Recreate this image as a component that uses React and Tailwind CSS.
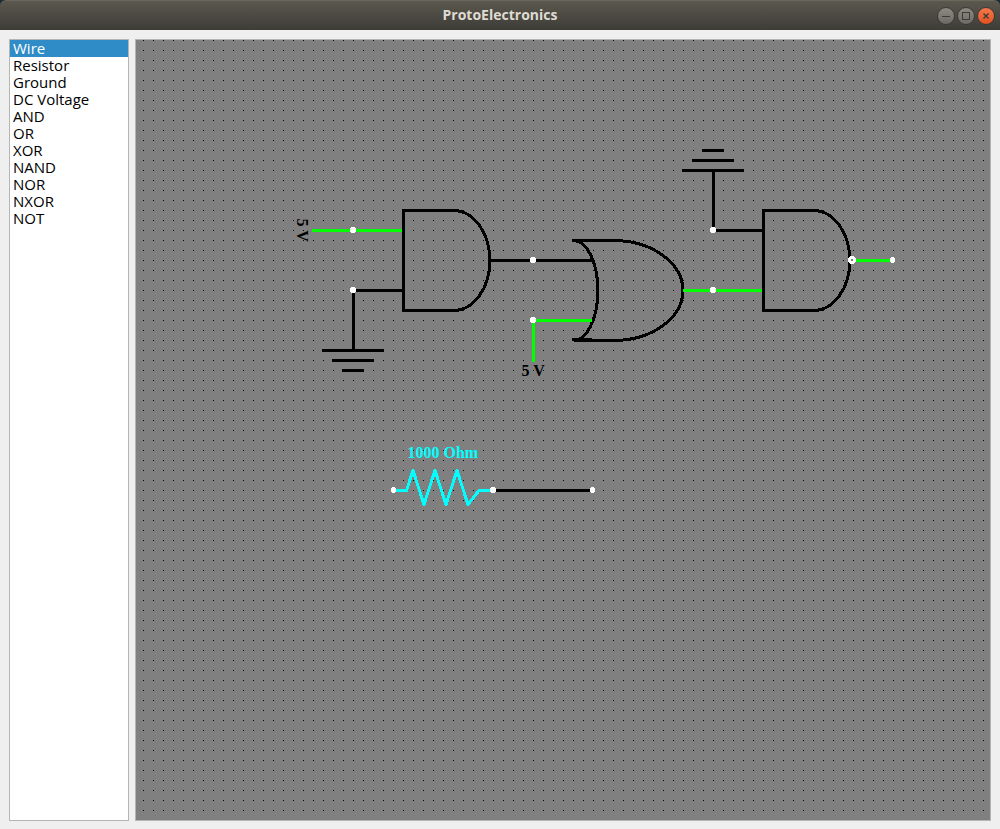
import { useState } from "react";

const PARTS = ["Wire", "Resistor", "Ground", "DC Voltage", "AND", "OR", "XOR", "NAND", "NOR", "NXOR", "NOT"];

function TitleBar() {
  const round =
    "flex size-[18px] items-center justify-center rounded-full border border-[#3a3934] bg-linear-to-b";
  return (
    <header className="grid h-[30px] grid-cols-[1fr_auto_1fr] items-center rounded-t-md border-t border-[#6a675c] bg-linear-to-b from-[#5b584e] to-[#3d3c37] px-[5px]">
      <h1 className="col-start-2 -mt-[2px] font-['Open_Sans',sans-serif] text-[14px] leading-5 font-bold text-[#dfdbd2]">
        ProtoElectronics
      </h1>
      <div className="flex justify-end gap-[2px]">
        <button type="button" aria-label="Minimize" className={`${round} from-[#8d8a81] to-[#6c6a62]`}>
          <svg width="16" height="16" viewBox="0 0 16 16" stroke="#3c3b37" fill="none" aria-hidden="true">
            <path d="M4 8.5h8" />
          </svg>
        </button>
        <button type="button" aria-label="Maximize" className={`${round} from-[#8d8a81] to-[#6c6a62]`}>
          <svg width="16" height="16" viewBox="0 0 16 16" stroke="#3c3b37" fill="none" aria-hidden="true">
            <rect x="4.5" y="4.5" width="7" height="7" />
          </svg>
        </button>
        <button type="button" aria-label="Close" className={`${round} from-[#f4784c] to-[#e3511f]`}>
          <svg width="16" height="16" viewBox="0 0 16 16" stroke="#3c3b37" strokeWidth="1.4" fill="none" aria-hidden="true">
            <path d="M5.5 5.5l5 5M10.5 5.5l-5 5" />
          </svg>
        </button>
      </div>
    </header>
  );
}

function PartList({ selected, onSelect }) {
  return (
    <nav aria-label="Parts" className="w-[120px] shrink-0 border border-[#b5b5b5] bg-white">
      <ul>
        {PARTS.map((part) => (
          <li key={part}>
            <button
              type="button"
              aria-pressed={part === selected}
              onClick={() => onSelect(part)}
              className={`block h-[17px] w-full px-[3px] text-left font-['Open_Sans',sans-serif] text-[15px] leading-[17px] ${
                part === selected ? "bg-[#308cc6] text-white" : "text-black"
              }`}
            >
              {part}
            </button>
          </li>
        ))}
      </ul>
    </nav>
  );
}

function AndGate({ x, y }) {
  return <path d={`M${x} ${y}v100h50a36.4 50 0 0 0 0 -100z`} />;
}

function OrGate({ x, y }) {
  return (
    <>
      <path d={`M${x - 2} ${y}h42a69.4 50 0 0 1 0 100h-40a24.4 50 0 0 0 0 -100`} />
      <path d={`M${x - 2} ${y + 99}h20`} />
    </>
  );
}

function Ground({ x, y, dir }) {
  return (
    <path
      d={`M${x} ${y}v${60 * dir}m-32 0h62m-52 ${10 * dir}h42m-32 ${10 * dir}h22`}
    />
  );
}

const NODES = [
  [210, 190, 3], [210, 250, 3], [390, 220, 3], [390, 280, 3], [570, 190, 3], [570, 250, 3],
  [250.5, 450, 2.5], [350, 450, 3], [449.5, 450, 2.5], [749.5, 220, 2.5],
];

function Schematic() {
  return (
    <svg
      className="block size-full"
      role="img"
      aria-label="Schematic"
      shapeRendering="crispEdges"
      fontFamily="'Liberation Serif', serif"
      fontSize="16"
      fontWeight="bold"
    >
      <defs>
        <pattern id="grid" x="7" width="10" height="10" patternUnits="userSpaceOnUse">
          <rect width="1" height="1" fill="#000" />
        </pattern>
      </defs>
      <rect width="100%" height="100%" fill="url(#grid)" />
      <g transform="translate(7.5 0.5)" fill="none" strokeWidth="3">
        <g stroke="#000">
          <path d="M210 250h50M346 220h103M570 190h50M350 450h99" />
          <AndGate x={260} y={170} />
          <AndGate x={620} y={170} />
          <OrGate x={430} y={200} />
          <Ground x={210} y={250} dir={1} />
          <Ground x={570} y={190} dir={-1} />
        </g>
        <g stroke="#00ff00">
          <path d="M168 190h90M390 321v-41h58M539 250h79M709 220h39" />
        </g>
        <path
          stroke="#00ffff"
          strokeLinejoin="round"
          d="M250 450h13l6.5-20 11 34 11-34 11 34 11-34 11 34 11-14h14"
        />
        <g fill="#000">
          <text x="378" y="335">5 V</text>
          <text transform="translate(153 178) rotate(90)">5 V</text>
        </g>
        <text x="264" y="417" fill="#00ffff">1000 Ohm</text>
      </g>
      <g transform="translate(7 0)" fill="#fff">
        {NODES.map(([x, y, rx]) => (
          <ellipse key={`${x}-${y}`} cx={x} cy={y} rx={rx} ry="3" />
        ))}
        <circle cx="709" cy="220" r="2.8" fill="none" stroke="#fff" strokeWidth="2.4" />
      </g>
    </svg>
  );
}

export default function App() {
  const [selected, setSelected] = useState("Wire");
  return (
    <div className="flex min-h-screen flex-col bg-[#1c2b2f]">
      <TitleBar />
      <main className="flex flex-1 gap-[6px] bg-[#efefef] pt-[9px] pr-[9px] pb-2 pl-[9px]">
        <PartList selected={selected} onSelect={setSelected} />
        <section aria-label="Canvas" className="grid min-w-0 flex-1 border border-[#b5b5b5] bg-[#808080]">
          <Schematic />
        </section>
      </main>
    </div>
  );
}
